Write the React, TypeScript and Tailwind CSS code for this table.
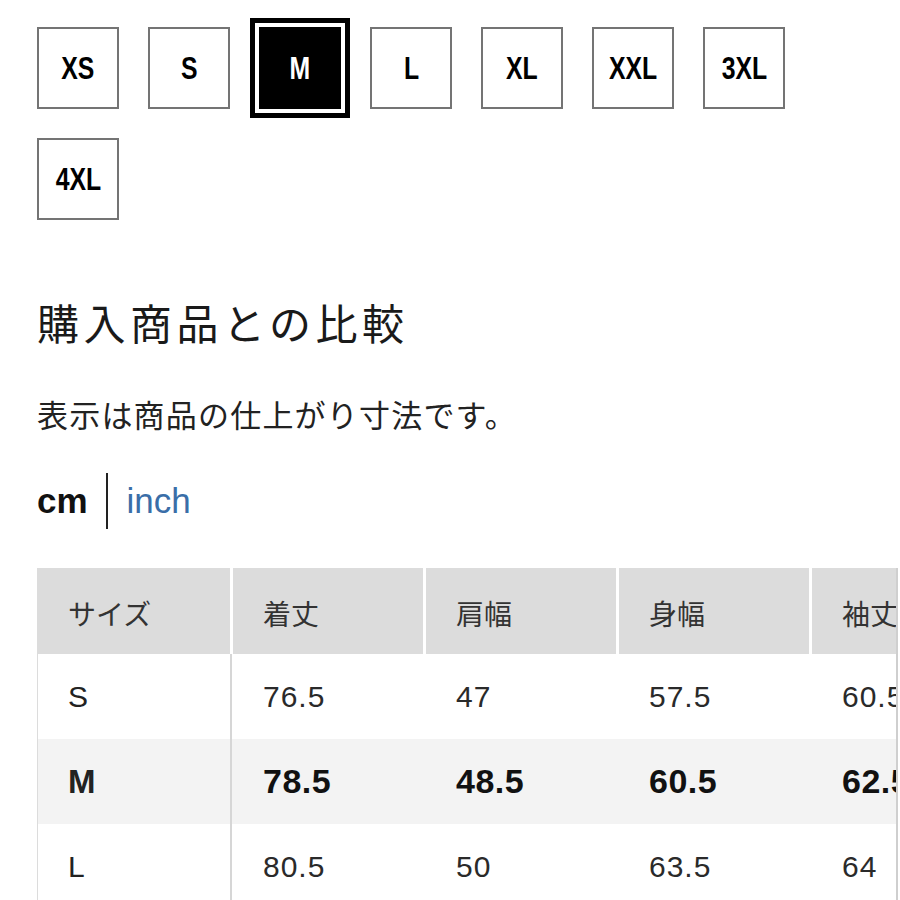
import React from "react";

const sizes = ["XS", "S", "M", "L", "XL", "XXL", "3XL", "4XL"];
const selected = "M";

const headers = ["サイズ", "着丈", "肩幅", "身幅", "袖丈"];
const rows = [
  { size: "S", values: ["76.5", "47", "57.5", "60.5"] },
  { size: "M", values: ["78.5", "48.5", "60.5", "62.5"], current: true },
  { size: "L", values: ["80.5", "50", "63.5", "64"] },
];

const jp = "font-['Noto_Sans_CJK_JP','Noto_Sans',sans-serif]";
const latin = "font-['Liberation_Sans','Noto_Sans_CJK_JP',sans-serif]";

function SizeButton({ label }: { label: string }) {
  const active = label === selected;
  return (
    <div
      className={
        active
          ? "flex h-[82px] w-[82px] items-center justify-center border-2 border-black bg-black text-white outline-[5px] outline-offset-[4px] outline-black"
          : "flex h-[82px] w-[82px] items-center justify-center border-2 border-[#747474] bg-white text-black"
      }
    >
      <span className="inline-block scale-x-[0.8] font-['Liberation_Sans',sans-serif] text-[31px] font-bold leading-none">
        {label}
      </span>
    </div>
  );
}

export default function App() {
  return (
    <div className="h-[900px] w-[900px] overflow-hidden bg-white text-[#1a1a1a]">
      {/* size picker */}
      <div className="flex w-[800px] flex-wrap gap-[29px] pl-[37px] pt-[27px]">
        {sizes.map((s) => (
          <SizeButton key={s} label={s} />
        ))}
      </div>

      <div className="pl-[37px]">
        <h2 className={`${jp} mt-[81px] text-[42px] font-normal leading-none tracking-[4.5px] text-[#1a1a1a]`}>
          購入商品との比較
        </h2>
        <p className={`${jp} mt-[55px] text-[31px] leading-none tracking-[1.2px] text-[#222]`}>
          表示は商品の仕上がり寸法です。
        </p>

        {/* unit toggle */}
        <div className="mt-[44px] flex h-[56px] items-center">
          <span className={`${latin} text-[35px] font-bold text-[#111]`}>cm</span>
          <span className="ml-[18px] mr-[19px] h-[56px] w-[2px] bg-[#222]" />
          <span className={`${latin} text-[35px] text-[#3a6ea8]`}>inch</span>
        </div>
      </div>

      {/* comparison table */}
      <div className="ml-[37px] mt-[39px] w-[861px] overflow-hidden border-r-2 border-[#cfcfcf]">
        <div className="flex w-[1200px] gap-[3px] bg-white">
          {headers.map((h, i) => (
            <div
              key={h}
              className={`${jp} flex h-[86px] shrink-0 items-center bg-[#dcdcdc] pt-[4px] text-[28px] text-[#333] ${
                i === 0 ? "w-[193px] pl-[31px]" : "w-[190px] pl-[30px]"
              }`}
            >
              {h}
            </div>
          ))}
        </div>
        {rows.map((r) => (
          <div
            key={r.size}
            className={`flex h-[85px] w-[1200px] border-l border-[#dcdcdc] ${r.current ? "bg-[#f3f3f3]" : "bg-white"}`}
          >
            <div
              className={`${latin} flex w-[194px] shrink-0 items-center border-r-2 border-[#d6d6d6] pl-[30px] text-[#222] ${
                r.current ? "text-[33px] font-bold text-[#111]" : "text-[30px]"
              }`}
            >
              {r.size}
            </div>
            {r.values.map((v, i) => (
              <div
                key={i}
                className={`${latin} flex h-full w-[190px] shrink-0 items-center pl-[30px] ${
                  i > 0 ? "ml-[3px]" : "ml-[1px]"
                } ${r.current ? "text-[34px] font-bold tracking-[0.5px] text-[#111]" : "text-[30px] tracking-[1px] text-[#2a2a2a]"}`}
              >
                {v}
              </div>
            ))}
          </div>
        ))}
      </div>
    </div>
  );
}
